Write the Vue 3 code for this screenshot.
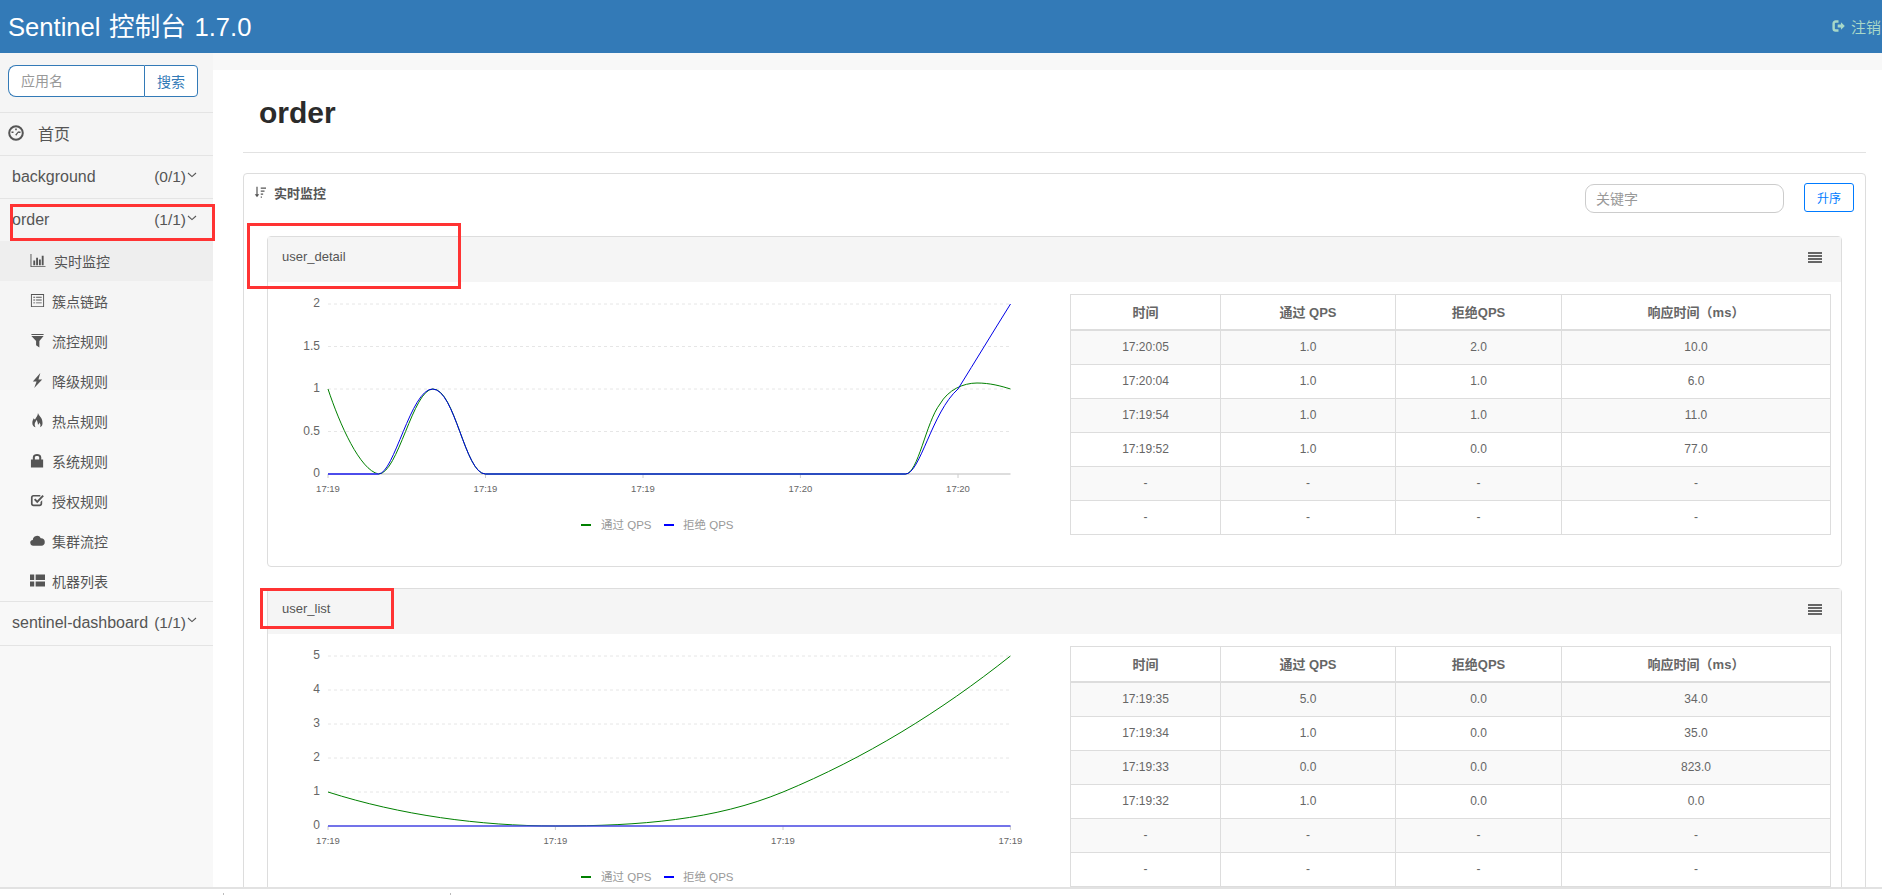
<template>
  <div class="shell">
    <header class="topbar">
      <span class="brand">Sentinel 控制台 1.7.0</span>
      <a class="logout">
        <svg class="ic-logout" viewBox="0 0 16 16"><path class="ln" d="M8 2.5H4.5a2.5 2.5 0 0 0-2.5 2.5v6a2.5 2.5 0 0 0 2.5 2.5H8" /><path d="M7 6.2h4V3.5L15.8 8 11 12.5V9.8H7z" /></svg>
        注销
      </a>
    </header>

    <div class="body">
      <aside class="sidebar">
        <div class="search">
          <input class="search-input" placeholder="应用名" />
          <button class="search-btn">搜索</button>
        </div>
        <div class="home">
          <svg class="ic-home" viewBox="0 0 16 16"><circle class="ln" cx="8" cy="8" r="6.8" /><path d="M3.5 6.5h2v1.5h-2zM7.2 3.5h1.6v1.8H7.2zM10.5 6.5h2v1.5h-2zM7.2 9.8l3-3.6.8.6-2.7 3.9z" /></svg>
          首页
        </div>
        <template v-for="app in apps" :key="app.name">
          <div class="app-row" :class="{ open: app.open }">
            <span class="app-name">{{ app.name }}</span>
            <span class="app-count">{{ app.count }}</span>
            <svg class="chevron" viewBox="0 0 10 6"><path d="M1 1l4 3.6L9 1" /></svg>
          </div>
          <ul v-if="app.open" class="menu">
            <li v-for="(item, i) in menu" :key="item.label" class="menu-item" :class="{ active: i === 0 }">
              <svg class="menu-icon" viewBox="0 0 16 16"><path :d="item.d" /></svg>
              <span>{{ item.label }}</span>
            </li>
          </ul>
        </template>
      </aside>

      <main class="main">
        <div class="title-block"><h1 class="title">order</h1></div>
        <section class="panel">
          <div class="panel-head">
            <svg class="ic-sort" viewBox="0 0 16 16"><path d="M3.2 1h1.6v10H7l-3 4-3-4h2.2zM9 2h7v1.6H9zM9 6h5v1.6H9zM9 10h3.2v1.6H9zM9 14h1.6v1.6H9z" /></svg>
            <span class="panel-title">实时监控</span>
            <input class="keyword" placeholder="关键字" />
            <button class="sort-btn">升序</button>
          </div>

          <div v-for="card in cards" :key="card.name" class="card">
            <div class="card-head">
              <span class="card-name">{{ card.name }}</span>
              <svg class="ic-menu" viewBox="0 0 14 11"><path d="M0 0h14v2H0zM0 3h14v2H0zM0 6h14v2H0zM0 9h14v2H0z" /></svg>
            </div>
            <div class="card-body">
              <svg class="chart" width="802" height="284" viewBox="0 0 802 284">
                <g v-for="t in card.yTicks" :key="t.label">
                  <line v-if="t.label !== '0'" class="grid" x1="60" x2="742.5" :y1="t.y" :y2="t.y" />
                  <text class="y-label" x="52" :y="t.y + 3">{{ t.label }}</text>
                </g>
                <line class="axis" x1="60" x2="742.5" y1="192" y2="192" />
                <g v-for="t in card.xTicks" :key="t.x">
                  <line class="tick" :x1="t.x" :x2="t.x" y1="192" y2="196" />
                  <text class="x-label" :x="t.x" y="210">{{ t.label }}</text>
                </g>
                <path class="line-green" :d="card.green" />
                <path class="line-blue" :d="card.blue" />
                <path class="line-flat" :d="card.flat" />
                <path class="line-mid" :d="card.mid" />
                <rect x="313" y="242" width="10" height="2" fill="#008000" />
                <text class="legend" x="333" y="247">通过 QPS</text>
                <rect x="396" y="242" width="10" height="2" fill="#0000ff" />
                <text class="legend" x="415" y="247">拒绝 QPS</text>
              </svg>
              <table class="stats">
                <colgroup>
                  <col style="width: 150px" /><col style="width: 175px" /><col style="width: 166px" /><col />
                </colgroup>
                <thead>
                  <tr><th>时间</th><th>通过 QPS</th><th>拒绝QPS</th><th>响应时间（ms）</th></tr>
                </thead>
                <tbody>
                  <tr v-for="(row, r) in card.rows" :key="r">
                    <td v-for="(cell, c) in row" :key="c">{{ cell }}</td>
                  </tr>
                </tbody>
              </table>
            </div>
          </div>
        </section>
      </main>
    </div>

    <footer class="foot"><i class="foot-mark"></i><i class="foot-mark"></i></footer>

    <div class="mark mark-order"></div>
    <div class="mark mark-detail"></div>
    <div class="mark mark-list"></div>
  </div>
</template>

<script setup>
const apps = [
  { name: 'background', count: '(0/1)' },
  { name: 'order', count: '(1/1)', open: true },
  { name: 'sentinel-dashboard', count: '(1/1)' }
]

const menu = [
  { label: '实时监控', d: 'M0 1h1v13h15v1H0zM3 8h2v5H3zM6 5h2v8H6zM9 7h2v6H9zM12 3h2v10h-2z' },
  { label: '簇点链路', d: 'M1 1h14v14H1zM2 2v12h12V2zM3.5 4h2v1h-2zM6.5 4h6v1h-6zM3.5 7h2v1h-2zM6.5 7h6v1h-6zM3.5 10h2v1h-2zM6.5 10h6v1h-6z' },
  { label: '流控规则', d: 'M1.5 1h13v1.2h-13zM1.5 3.2h13L10 8.5V15.5L6.5 13V8.5z' },
  { label: '降级规则', d: 'M11 0L3 9h4l-2.5 7L13 7H9l2-7z' },
  { label: '热点规则', d: 'M8.5 0c.8 3 4.8 5 4.8 10a5 5 0 0 1-2.8 5.2c1-1.7.9-3.7-.6-5.2 0 1.5-.9 2-1.4 2.5C8.3 11 8 9 7 7.2c-.5 2-2 2.7-2 5 0 1 .3 2 1 3A5 5 0 0 1 2.5 10c0-2 .9-3 1.4-4.5.5 1 1 1.4 1.5 1.5C6 5 8.5 3 8.5 0z' },
  { label: '系统规则', d: 'M1 7h13v8.5H1zM3 7V4.5C3 2 5.2 1 7.5 1S12 2 12 4.5V7H9.8V4.5c0-.9-1.1-1.3-2.3-1.3S5.2 3.6 5.2 4.5V7z' },
  { label: '授权规则', d: 'M3.5 2H11v1.8H3.8c-.6 0-1 .4-1 1v6.4c0 .6.4 1 1 1h6.4c.6 0 1-.4 1-1V9.5L13 7.7v3.8c0 1.5-1.2 2.7-2.7 2.7H3.7C2.2 14.2 1 13 1 11.5v-7C1 3.1 2.1 2 3.5 2zM4.2 7.2l1.5-1.4 2 2.1L13.3 2l1.5 1.4-7.1 7.4z' },
  { label: '集群流控', d: 'M3.5 13.5a3 3 0 0 1-.5-6A4.5 4.5 0 0 1 11.5 5.5 4 4 0 0 1 12 13.5z' },
  { label: '机器列表', d: 'M0 1.5h4.5v6H0zM6 1.5h10v6H6zM0 9h4.5v5.5H0zM6 9h10v5.5H6z' }
]

const chart1Ticks = [
  { label: '2', y: 22 }, { label: '1.5', y: 64.5 }, { label: '1', y: 107 }, { label: '0.5', y: 149.5 }, { label: '0', y: 192 }
]
const chart2Ticks = [
  { label: '5', y: 22 }, { label: '4', y: 56 }, { label: '3', y: 90 }, { label: '2', y: 124 }, { label: '1', y: 158 }, { label: '0', y: 192 }
]

const cards = [
  {
    name: 'user_detail',
    yTicks: chart1Ticks,
    xTicks: [
      { x: 60, label: '17:19' }, { x: 217.5, label: '17:19' }, { x: 375, label: '17:19' }, { x: 532.4, label: '17:20' }, { x: 690, label: '17:20' }
    ],
    green: 'M60 107C72 143 92 188 110.5 192C130 192 145 107 165 107C187 107 197 192 217.5 192L637.5 192C650 192 658 140 672 122C680 108 695 101 709 101C722 101 733 104 742.5 107',
    blue: 'M60 192L110.5 192C126 192 143 107 164.5 107C187 107 197 192 217.5 192L637.5 192C652 192 664 130 690 107C708 78 725 50 742.5 22',
    flat: 'M60 192H110',
    mid: 'M217.5 192H637.5',
    rows: [
      ['17:20:05', '1.0', '2.0', '10.0'],
      ['17:20:04', '1.0', '1.0', '6.0'],
      ['17:19:54', '1.0', '1.0', '11.0'],
      ['17:19:52', '1.0', '0.0', '77.0'],
      ['-', '-', '-', '-'],
      ['-', '-', '-', '-']
    ]
  },
  {
    name: 'user_list',
    yTicks: chart2Ticks,
    xTicks: [
      { x: 60, label: '17:19' }, { x: 287.4, label: '17:19' }, { x: 515, label: '17:19' }, { x: 742.4, label: '17:19' }
    ],
    green: 'M60 158C132 181 212 192 287.4 192C372 192 447 186 515 158C597 124 672 78 742.4 22',
    blue: '',
    flat: 'M60 192H742.5',
    mid: '',
    rows: [
      ['17:19:35', '5.0', '0.0', '34.0'],
      ['17:19:34', '1.0', '0.0', '35.0'],
      ['17:19:33', '0.0', '0.0', '823.0'],
      ['17:19:32', '1.0', '0.0', '0.0'],
      ['-', '-', '-', '-'],
      ['-', '-', '-', '-']
    ]
  }
]
</script>

<style scoped>
.shell {
  position: relative;
  height: 895px;
  overflow: hidden;
  display: flex;
  flex-direction: column;
  background: #fff;
  color: #666;
  font-family: "Liberation Sans", "Noto Sans CJK SC", sans-serif;
}

.topbar {
  flex: none;
  height: 53px;
  display: flex;
  align-items: center;
  justify-content: space-between;
  padding: 0 1px 5px 8px;
  box-sizing: border-box;
  background: #337ab7;
}

.brand {
  color: #fff;
  font-size: 25.6px;
  word-spacing: 1.5px;
}

.logout {
  display: flex;
  align-items: center;
  gap: 6px;
  margin-top: 4px;
  color: #a8d8c8;
  font-size: 15px;
}

.ic-logout {
  width: 13px;
  height: 14px;
  fill: currentColor;
}

.ic-logout .ln {
  fill: none;
  stroke: currentColor;
  stroke-width: 3;
}

.body {
  flex: none;
  height: 834px;
  display: flex;
  overflow: hidden;
}

.sidebar {
  flex: none;
  width: 213px;
  background: linear-gradient(#f5f5f5 337px, #f8f8f8 337px);
  color: #555;
}

.search {
  height: 60px;
  box-sizing: border-box;
  padding: 12px 15px 0 8px;
  display: flex;
  border-bottom: 1px solid #e4e4e4;
}

.search-input {
  width: 136px;
  height: 32px;
  box-sizing: border-box;
  padding: 0 12px;
  border: 1px solid #337ab7;
  border-right: 0;
  border-radius: 8px 0 0 8px;
  background: #fff;
  outline: none;
  font: 14px "Liberation Sans", "Noto Sans CJK SC", sans-serif;
}

.search-input::placeholder,
.keyword::placeholder {
  color: #999;
}

.search-btn {
  width: 54px;
  height: 32px;
  padding: 0;
  border: 1px solid #337ab7;
  border-radius: 0 4px 4px 0;
  background: #fff;
  color: #337ab7;
  font: 14px "Liberation Sans", "Noto Sans CJK SC", sans-serif;
}

.home {
  height: 43px;
  box-sizing: border-box;
  display: flex;
  align-items: center;
  padding: 0 0 2px 8px;
  gap: 14px;
  border-bottom: 1px solid #e4e4e4;
  font-size: 16px;
}

.ic-home {
  width: 16px;
  height: 16px;
  fill: #555;
}

.ic-home .ln {
  fill: none;
  stroke: #555;
  stroke-width: 2;
}

.app-row {
  height: 43px;
  box-sizing: border-box;
  display: flex;
  align-items: center;
  padding: 0 16px 0 12px;
  border-bottom: 1px solid #e4e4e4;
  font-size: 16px;
}

.app-row.open {
  height: 42px;
  border-bottom: 0;
}

.menu + .app-row {
  height: 44px;
  padding-bottom: 2px;
}

.app-name {
  flex: 1;
}

.app-count {
  font-size: 15.5px;
}

.chevron {
  width: 10px;
  height: 6px;
  margin: -5px 0 0 1px;
  fill: none;
  stroke: #555;
  stroke-width: 1.1;
}

.menu {
  margin: 0;
  padding: 0;
  list-style: none;
  border-bottom: 1px solid #e4e4e4;
}

.menu-item {
  height: 40px;
  box-sizing: border-box;
  display: flex;
  align-items: center;
  gap: 8px;
  padding: 0 0 1px 30px;
  font-size: 14px;
}

.menu-item.active {
  background: #eee;
}

.menu-icon {
  width: 15px;
  height: 15px;
  margin-right: -1px;
  fill: #555;
}

.menu-item.active .menu-icon {
  width: 16px;
  margin-right: 0;
}

.main {
  flex: 1;
  min-width: 0;
  margin-top: 17px;
  padding: 0 16px 0 30px;
  background: #fff;
  box-shadow: 0 -17px 0 #f8f8f8;
}

.title-block {
  height: 83px;
  box-sizing: border-box;
  border-bottom: 1px solid #e2e2e2;
  margin-bottom: 20px;
}

.title {
  margin: 0;
  padding: 25px 0 0 16px;
  color: #2b2b2b;
  font-size: 30px;
  line-height: 36px;
  font-weight: 700;
}

.panel {
  border: 1px solid #ddd;
  border-radius: 4px;
  padding: 0 24px 0 23px;
}

.panel-head {
  height: 62px;
  display: flex;
  align-items: flex-start;
}

.ic-sort {
  width: 12px;
  height: 14px;
  margin: 11px 8px 0 -13px;
  fill: #555;
}

.panel-title {
  flex: 1;
  margin-top: 9px;
  color: #555;
  font-size: 13px;
  font-weight: 700;
}

.keyword {
  width: 199px;
  height: 29px;
  box-sizing: border-box;
  margin: 10px 20px 0 0;
  padding: 0 10px;
  border: 1px solid #ccc;
  border-radius: 9px;
  outline: none;
  font: 14px "Liberation Sans", "Noto Sans CJK SC", sans-serif;
}

.sort-btn {
  width: 50px;
  height: 29px;
  margin: 9px -13px 0 0;
  padding: 0;
  border: 1px solid #007bff;
  border-radius: 3px;
  background: #fff;
  color: #007bff;
  font: 12px "Liberation Sans", "Noto Sans CJK SC", sans-serif;
}

.card {
  border: 1px solid #ddd;
  border-radius: 4px;
  margin-bottom: 21px;
  width: 1575px;
  box-sizing: border-box;
}

.card-head {
  height: 45px;
  display: flex;
  align-items: center;
  justify-content: space-between;
  padding: 0 19px 5px 14px;
  box-sizing: border-box;
  background: #f5f5f5;
  color: #555;
  font-size: 13px;
}

.card-name {
  margin-top: -2px;
}

.ic-menu {
  width: 14px;
  height: 11px;
  fill: #666;
}

.card-body {
  height: 284px;
  display: flex;
  align-items: flex-start;
}

.chart {
  flex: none;
}

.grid {
  stroke: #e6e6e6;
  stroke-dasharray: 3 3;
}

.axis {
  stroke: #ddd;
  stroke-width: 2;
}

.tick {
  stroke: #ccc;
}

.y-label {
  fill: #666;
  font-size: 12px;
  text-anchor: end;
}

.x-label {
  fill: #666;
  font-size: 9.5px;
  text-anchor: middle;
}

.legend {
  fill: #999;
  font-size: 11.5px;
}

.line-green,
.line-blue {
  fill: none;
  stroke-width: 1;
}

.line-green {
  stroke: #008000;
}

.line-blue {
  stroke: #0000e6;
}

.line-flat {
  fill: none;
  stroke: #3a3af0;
  stroke-width: 2;
  opacity: 0.65;
}

.line-mid {
  fill: none;
  stroke: #2b4cc0;
  stroke-width: 2;
}

.stats {
  width: 761px;
  flex: none;
  margin-top: 12px;
  border-collapse: collapse;
  table-layout: fixed;
  font-size: 12px;
}

.stats th,
.stats td {
  border: 1px solid #ddd;
  text-align: center;
  padding: 0 0 2px;
  height: 31px;
}

.stats th {
  height: 32px;
  border-bottom-width: 2px;
  font-size: 13px;
}

.stats tbody tr:nth-child(odd) {
  background: #f9f9f9;
}

.foot {
  flex: none;
  height: 8px;
  box-sizing: border-box;
  display: flex;
  align-items: flex-end;
  gap: 226px;
  padding-left: 223px;
  border-top: 2px solid #e2e2e2;
  background: #fff;
}

.foot-mark {
  width: 1px;
  height: 2px;
  background: #bbb;
}

.mark {
  position: absolute;
  box-sizing: border-box;
  border: 3px solid #f33;
}

.mark-order {
  left: 10px;
  top: 204px;
  width: 205px;
  height: 37px;
}

.mark-detail {
  left: 247px;
  top: 223px;
  width: 214px;
  height: 66px;
}

.mark-list {
  left: 260px;
  top: 588px;
  width: 134px;
  height: 41px;
}
</style>
